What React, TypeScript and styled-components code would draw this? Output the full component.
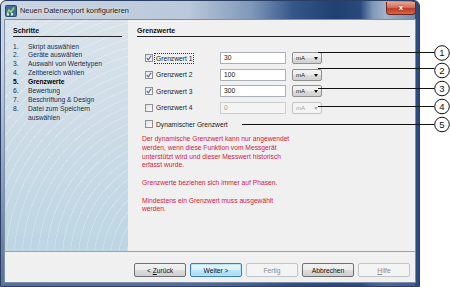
import React from 'react';
import styled, { createGlobalStyle, css } from 'styled-components';

const GlobalStyle = createGlobalStyle`
  html, body {
    margin: 0;
    padding: 0;
    background: #fff;
  }
  body {
    font-family: 'Liberation Sans', Arial, sans-serif;
  }
`;

const steps: { n: number; lines: string[]; active?: boolean }[] = [
  { n: 1, lines: ['Skript auswählen'] },
  { n: 2, lines: ['Geräte auswählen'] },
  { n: 3, lines: ['Auswahl von Wertetypen'] },
  { n: 4, lines: ['Zeitbereich wählen'] },
  { n: 5, lines: ['Grenzwerte'], active: true },
  { n: 6, lines: ['Bewertung'] },
  { n: 7, lines: ['Beschriftung & Design'] },
  { n: 8, lines: ['Datei zum Speichern', 'auswählen'] },
];

const limits = [
  { label: 'Grenzwert 1', value: '30', checked: true, enabled: true, focus: true },
  { label: 'Grenzwert 2', value: '100', checked: true, enabled: true },
  { label: 'Grenzwert 3', value: '300', checked: true, enabled: true },
  { label: 'Grenzwert 4', value: '0', checked: false, enabled: false },
];

// callout lines: y, start x
const callouts = [
  { n: 1, y: 52.5, cy: 53, x1: 318 },
  { n: 2, y: 68.5, cy: 70.5, x1: 318 },
  { n: 3, y: 88.5, cy: 88.5, x1: 318 },
  { n: 4, y: 106.5, cy: 106.5, x1: 318 },
  { n: 5, y: 124.5, cy: 124.5, x1: 242 },
];

const CheckMark = () => (
  <svg width="6" height="6" viewBox="0 0 6 6">
    <path d="M0.8 3.2 L2.3 4.8 L5.2 0.8" fill="none" stroke="#4a64a0" strokeWidth="1.1" />
  </svg>
);

const AppIcon = () => (
  <svg width="12" height="12" viewBox="0 0 12 12">
    <rect x="0.5" y="0.5" width="11" height="11" rx="1" fill="#3f6f9f" stroke="#2a4b6e" />
    <path d="M2 9 L4 5 L6 7 L9 2.5" fill="none" stroke="#9fd36a" strokeWidth="1.6" />
    <rect x="2" y="8.5" width="2" height="2" fill="#e2f0c0" />
    <rect x="6" y="8" width="2" height="2.5" fill="#e2f0c0" />
  </svg>
);

const App: React.FC = () => {
  return (
    <Stage>
      <GlobalStyle />
      <Window>
        <TitleBar>
          <AppIcon />
          <TitleText>Neuen Datenexport konfigurieren</TitleText>
          <CloseButton>x</CloseButton>
        </TitleBar>
        <Client>
          <Body>
            <Sidebar>
              <Heading>Schritte</Heading>
              <StepList>
                {steps.map(step => (
                  <React.Fragment key={step.n}>
                    <StepNum $active={step.active}>{step.n}.</StepNum>
                    <StepText $active={step.active}>
                      {step.lines.map((l, i) => (
                        <div key={i}>{l}</div>
                      ))}
                    </StepText>
                  </React.Fragment>
                ))}
              </StepList>
            </Sidebar>
            <Main>
              <Heading>Grenzwerte</Heading>
              <Rows>
                {limits.map(row => (
                  <Row key={row.label}>
                    <Check $checked={row.checked}>{row.checked && <CheckMark />}</Check>
                    <Label>
                      <LabelText $focus={row.focus}>{row.label}</LabelText>
                    </Label>
                    <Input $disabled={!row.enabled}>{row.value}</Input>
                    <Combo $disabled={!row.enabled}>
                      mA
                      <Arrow $disabled={!row.enabled} />
                    </Combo>
                  </Row>
                ))}
              </Rows>
              <DynRow>
                <Check $checked={false} />
                <LabelText>Dynamischer Grenzwert</LabelText>
              </DynRow>
              <Notes>
                <p>
                  Der dynamische Grenzwert kann nur angewendet
                  <br />
                  werden, wenn diese Funktion vom Messgerät
                  <br />
                  unterstützt wird und dieser Messwert historisch
                  <br />
                  erfasst wurde.
                </p>
                <p>Grenzwerte beziehen sich immer auf Phasen.</p>
                <p>
                  Mindestens ein Grenzwert muss ausgewählt
                  <br />
                  werden.
                </p>
              </Notes>
            </Main>
          </Body>
          <Footer>
            <Button>
              <span>
                &lt; <u>Z</u>urück
              </span>
            </Button>
            <Button $primary>
              <span>Weiter &gt;</span>
            </Button>
            <Button $disabled>
              <span>Fertig</span>
            </Button>
            <Button>
              <span>Abbrechen</span>
            </Button>
            <Button $disabled>
              <span>
                <u>H</u>ilfe
              </span>
            </Button>
          </Footer>
        </Client>
      </Window>

      <Callouts width="450" height="287" viewBox="0 0 450 287">
        {callouts.map(c => (
          <g key={c.n}>
            <line x1={c.x1} y1={c.y} x2={434.5} y2={c.y} stroke="#111" strokeWidth="1" />
            <circle cx="442" cy={c.cy} r="7.3" fill="#fff" stroke="#111" strokeWidth="1" />
            <text
              x="442"
              y={c.cy + 3.3}
              textAnchor="middle"
              fontSize="9.5"
              fontFamily="'Liberation Sans', Arial, sans-serif"
              fill="#111"
            >
              {c.n}
            </text>
          </g>
        ))}
      </Callouts>
    </Stage>
  );
};

export default App;

const Stage = styled.div`
   position: relative;
   width: 450px;
   height: 287px;
   overflow: hidden;
   background: #fff;
`;

const Window = styled.div`
   width: 420px;
   height: 287px;
   box-sizing: border-box;
   display: flex;
   flex-direction: column;
   padding: 0 4px 4px;
   border: 1px solid #2a3f63;
   border-radius: 6px 6px 0 0;
   background:
      linear-gradient(to bottom, rgba(70, 100, 150, 0) 20%, rgba(45, 78, 132, 0.75) 100%),
      linear-gradient(
         to right,
         #cbd6e3 0%,
         #b9c8da 45%,
         #7e97ba 60%,
         #34568a 70%,
         #203f71 80%,
         #2a497c 86%,
         #8299b9 89%,
         #a3b4ca 92%,
         #6f88ad 100%
      );
   box-shadow: inset -4px 0 0 #2c4b7e;
`;

const TitleBar = styled.div`
   height: 19px;
   display: flex;
   align-items: center;
   gap: 3px;
`;

const TitleText = styled.span`
   font-size: 7.4px;
   color: #1b1b1b;
   text-shadow: 0 0 4px rgba(255, 255, 255, 0.9);
   flex: 1;
`;

const CloseButton = styled.div`
   width: 28px;
   height: 12px;
   margin-top: -5px;
   margin-right: -1px;
   border: 1px solid #6b2a20;
   border-top: none;
   border-radius: 0 0 4px 4px;
   background: linear-gradient(to bottom, #e8a394 0%, #d2705d 45%, #bf3b24 55%, #d9654a 100%);
   color: #fff;
   font-size: 8px;
   font-weight: bold;
   display: flex;
   align-items: center;
   justify-content: center;
   text-shadow: 0 0 2px #6b2a20;
`;

const Client = styled.div`
   flex: 1;
   display: flex;
   flex-direction: column;
   background: #f0f0f0;
   box-shadow: 0 0 0 1px #7d8ea6;
`;

const Body = styled.div`
   height: 231px;
   display: flex;
`;

const Sidebar = styled.div`
   width: 123px;
   box-sizing: border-box;
   padding: 6px 6px 0 8px;
   background:
      repeating-radial-gradient(
         circle at 150% 105%,
         rgba(255, 255, 255, 0) 0 7px,
         rgba(255, 255, 255, 0.22) 7px 8px
      ),
      linear-gradient(to bottom, #dae3eb 0%, #cddce7 45%, #bdd6e3 100%);
`;

const Heading = styled.div`
   font-size: 7px;
   font-weight: bold;
   line-height: 10px;
   color: #111;
   border-bottom: 1px solid #222;
`;

const StepList = styled.div`
   display: grid;
   grid-template-columns: 15px 1fr;
   margin-top: 5.5px;
   font-size: 6.7px;
   line-height: 8.9px;
`;

const StepNum = styled.div<{ $active?: boolean }>`
   color: ${p => (p.$active ? '#000' : '#1c2f4a')};
   font-weight: ${p => (p.$active ? 'bold' : 'normal')};
`;

const StepText = styled.div<{ $active?: boolean }>`
   color: ${p => (p.$active ? '#000' : '#1c2f4a')};
   font-weight: ${p => (p.$active ? 'bold' : 'normal')};
`;

const Main = styled.div`
   flex: 1;
   padding: 6px 5px 0 9px;
`;

const Rows = styled.div`
   display: flex;
   flex-direction: column;
   gap: 4.5px;
   margin-top: 15px;
`;

const Row = styled.div`
   display: flex;
   align-items: center;
   height: 12px;
   padding-left: 8px;
`;

const Check = styled.span<{ $checked: boolean }>`
   width: 8px;
   height: 8px;
   box-sizing: border-box;
   flex: none;
   border: 1px solid #8e9194;
   background: linear-gradient(135deg, #e3e3e3 0%, #fbfbfb 100%);
   display: flex;
   align-items: center;
   justify-content: center;
`;

const Label = styled.div`
   width: 65px;
   margin-left: 2px;
   display: flex;
`;

const LabelText = styled.span<{ $focus?: boolean }>`
   font-size: 6.7px;
   color: #222;
   line-height: 9px;
   padding: 0 1px;
   outline: ${p => (p.$focus ? '1px dotted #333' : 'none')};
`;

const Input = styled.div<{ $disabled?: boolean }>`
   width: 66px;
   height: 12px;
   box-sizing: border-box;
   padding-left: 3px;
   font-size: 6.7px;
   line-height: 10px;
   border: 1px solid #abb0b6;
   background: #fff;
   color: #111;
   ${p =>
      p.$disabled &&
      css`
         background: #f4f4f4;
         border-color: #cdcdcd;
         color: #9a9a9a;
      `}
`;

const Combo = styled.div<{ $disabled?: boolean }>`
   width: 30px;
   height: 12px;
   box-sizing: border-box;
   margin-left: 6px;
   padding: 0 3px;
   display: flex;
   align-items: center;
   justify-content: space-between;
   font-size: 6px;
   color: #222;
   border: 1px solid #8f8f8f;
   border-radius: 2px;
   background: linear-gradient(to bottom, #f4f4f4 0%, #ebebeb 50%, #dcdcdc 51%, #d2d2d2 100%);
   ${p =>
      p.$disabled &&
      css`
         color: #a3a3a3;
         border-color: #c4c4c4;
         background: #f4f4f4;
      `}
`;

const Arrow = styled.span<{ $disabled?: boolean }>`
   width: 0;
   height: 0;
   border-left: 2.5px solid transparent;
   border-right: 2.5px solid transparent;
   border-top: 3px solid ${p => (p.$disabled ? '#b0b0b0' : '#111')};
   margin-top: 1px;
`;

const DynRow = styled.div`
   display: flex;
   align-items: center;
   gap: 2px;
   height: 12px;
   margin-top: 4.5px;
   padding-left: 8px;
`;

const Notes = styled.div`
   margin-top: 5px;
   margin-left: 5px;
   font-size: 6.7px;
   line-height: 8.8px;
   color: #d0223f;

   p {
      margin: 0 0 8.8px;
   }
`;

const Footer = styled.div`
   flex: 1;
   display: flex;
   justify-content: flex-end;
   align-items: flex-start;
   gap: 4px;
   padding: 11px 5px 0 0;
   border-top: 1px solid #a0a0a0;
`;

const Button = styled.div<{ $primary?: boolean; $disabled?: boolean }>`
   width: 52px;
   height: 14px;
   box-sizing: border-box;
   display: flex;
   align-items: center;
   justify-content: center;
   font-size: 6.7px;
   color: #111;
   border: 1px solid #707070;
   border-radius: 2px;
   background: linear-gradient(to bottom, #f2f2f2 0%, #ebebeb 50%, #dddddd 51%, #cfcfcf 100%);
   ${p =>
      p.$primary &&
      css`
         border-color: #3c7fb1;
         box-shadow: inset 0 0 0 1px #b9e3f7;
         background: linear-gradient(to bottom, #eaf6fd 0%, #d9f0fc 50%, #bee6fd 51%, #a7d9f5 100%);
      `}
   ${p =>
      p.$disabled &&
      css`
         color: #8a8a8a;
         border-color: #c2c5c8;
         background: #f4f4f4;
      `}
`;

const Callouts = styled.svg`
   position: absolute;
   top: 0;
   left: 0;
   pointer-events: none;
`;
